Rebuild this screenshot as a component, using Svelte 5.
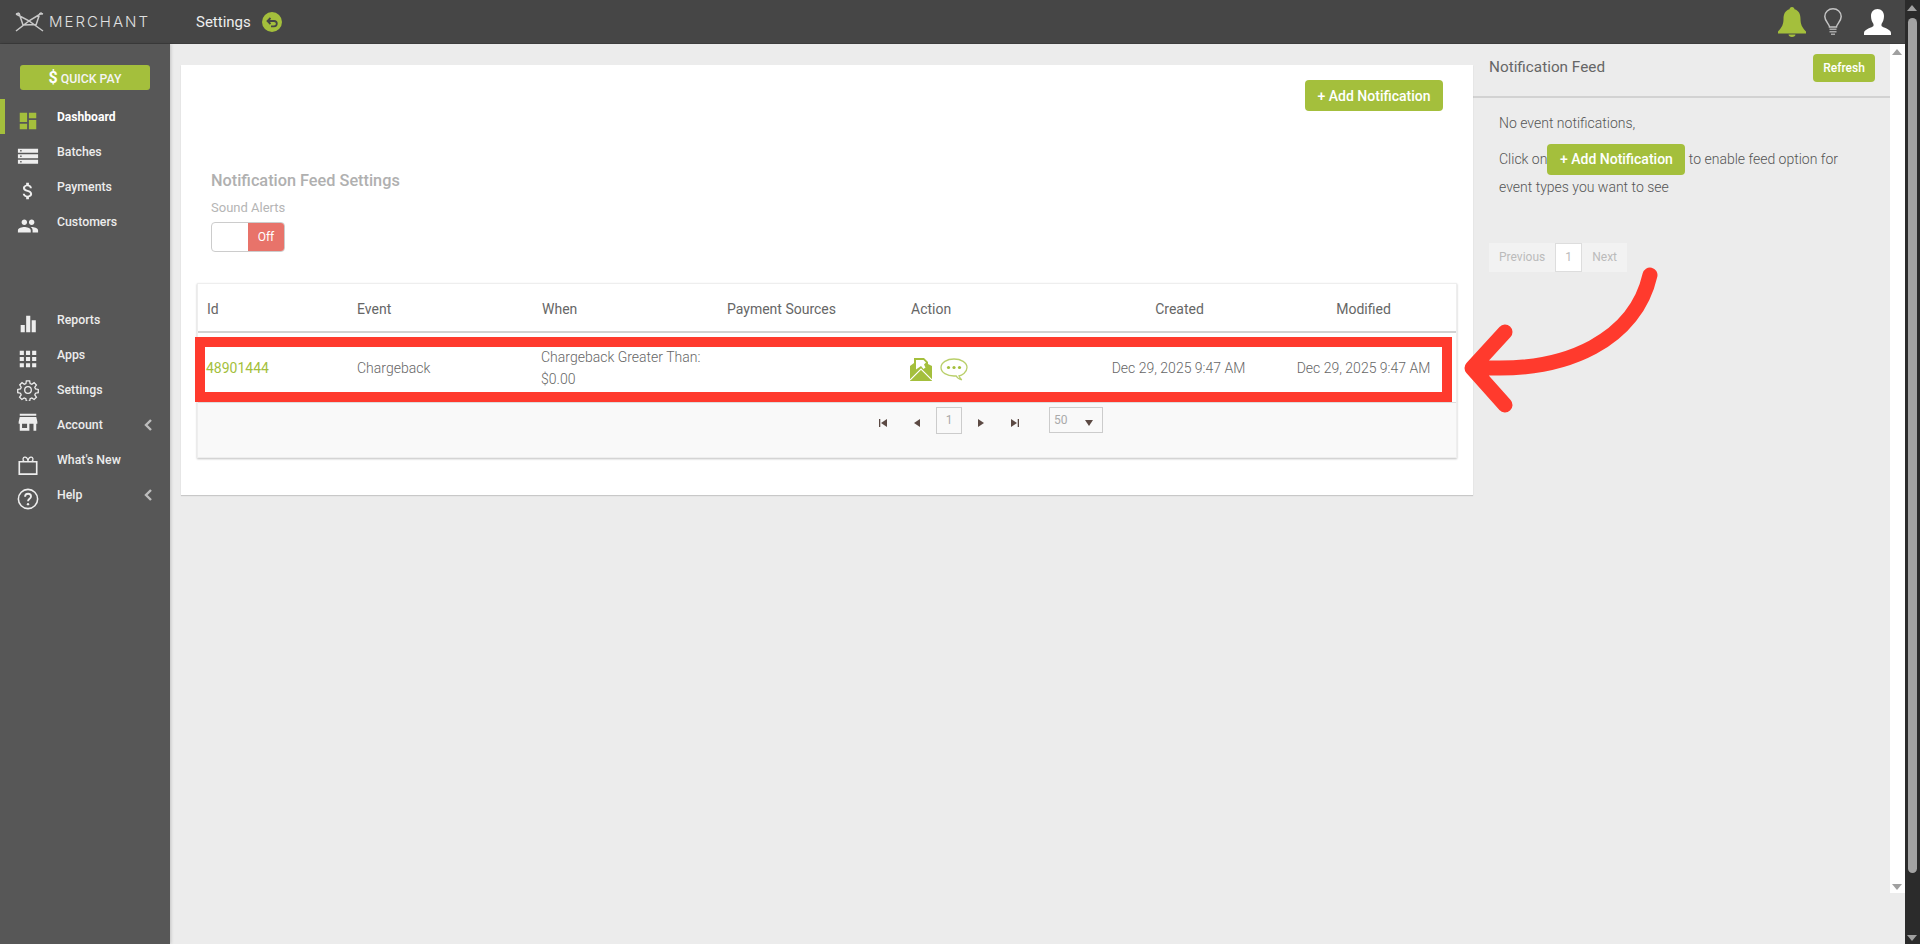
<script lang="ts">
  const topNav = [
    { label: 'Dashboard', icon: 'dashboard', active: true },
    { label: 'Batches', icon: 'batches' },
    { label: 'Payments', icon: 'payments' },
    { label: 'Customers', icon: 'customers' },
  ];
  const lowerNav = [
    { label: 'Reports', icon: 'reports' },
    { label: 'Apps', icon: 'apps' },
    { label: 'Settings', icon: 'settings' },
    { label: 'Account', icon: 'account', more: true },
    { label: "What's New", icon: 'new' },
    { label: 'Help', icon: 'help', more: true },
  ];
  const columns = ['Id', 'Event', 'When', 'Payment Sources', 'Action', 'Created', 'Modified'];
</script>

{#snippet navIcon(name: string)}
  <svg class="nav-icon" viewBox="0 0 24 24" aria-hidden="true">
    {#if name === 'dashboard'}
      <path fill="#a4bf3c" d="M3 13h8V3H3v10zm0 8h8v-6H3v6zm10 0h8V11h-8v10zm0-18v6h8V3h-8z" />
    {:else if name === 'batches'}
      <path fill="#eee" d="M1 4h22v4.500H1zM1 10h22v4.500H1zM1 16h22v4.500H1z" />
      <path fill="#575757" d="M3.500 5.500H5v1.500H3.500zM3.500 11.500H5V13H3.500zM3.500 17.500H5V19H3.500z" />
    {:else if name === 'payments'}
      <path fill="#eee" d="M11.800 10.900c-2.270-.590-3-1.200-3-2.150 0-1.090 1.010-1.850 2.700-1.850 1.780 0 2.440.850 2.500 2.100h2.210c-.070-1.720-1.120-3.300-3.210-3.810V3h-3v2.160c-1.940.420-3.500 1.680-3.500 3.610 0 2.310 1.910 3.460 4.700 4.130 2.500.600 3 1.480 3 2.410 0 .690-.490 1.790-2.700 1.790-2.060 0-2.870-.920-2.980-2.100h-2.200c.120 2.190 1.760 3.420 3.700 3.830V21h3v-2.150c1.950-.370 3.500-1.500 3.500-3.550 0-2.840-2.430-3.810-4.700-4.400z" />
    {:else if name === 'customers'}
      <path fill="#eee" d="M16 11c1.660 0 2.990-1.340 2.990-3S17.660 5 16 5c-1.660 0-3 1.340-3 3s1.340 3 3 3zm-8 0c1.660 0 2.990-1.340 2.990-3S9.660 5 8 5C6.340 5 5 6.340 5 8s1.340 3 3 3zm0 2c-2.330 0-7 1.170-7 3.500V19h14v-2.500c0-2.330-4.670-3.500-7-3.500zm8 0c-.290 0-.620.020-.970.050 1.160.840 1.970 1.970 1.970 3.450V19h6v-2.500c0-2.330-4.670-3.500-7-3.500z" />
    {:else if name === 'reports'}
      <path fill="#eee" d="M4 13h4.500v8H4zM10 3h4.500v18H10zM16 8h4.500v13H16z" />
    {:else if name === 'apps'}
      <path fill="#eee" d="M3 3h4.500v4.500H3zM9.800 3h4.500v4.500H9.800zM16.500 3H21v4.500h-4.500zM3 9.800h4.500v4.500H3zM9.800 9.800h4.500v4.500H9.800zM16.500 9.800H21v4.500h-4.500zM3 16.500h4.500V21H3zM9.800 16.500h4.500V21H9.800zM16.500 16.500H21V21h-4.500z" />
    {:else if name === 'settings'}
      <g fill="none" stroke="#eee" stroke-width="1.400">
        <circle cx="12" cy="12" r="3.600" />
        <path d="M10.200 2h3.600l.5 3 1.900.8 2.500-1.800 2.500 2.500-1.800 2.500.8 1.900 3 .5v3.600l-3 .5-.8 1.900 1.800 2.500-2.500 2.500-2.500-1.800-1.900.8-.5 3h-3.600l-.5-3-1.900-.8-2.500 1.800-2.500-2.500 1.800-2.500-.8-1.900-3-.5v-3.600l3-.5.8-1.900L3 6.500 5.500 4 8 5.800 9.700 5z" />
      </g>
    {:else if name === 'account'}
      <path fill="#eee" d="M21 3H3v2.200h18zm1.200 11v-2.200L21 6.500H3l-1.200 5.300V14H3v7.500h10.500V14h4.500v7.500h3V14zM11 18.500H5.500V14H11z" />
    {:else if name === 'new'}
      <g fill="none" stroke="#eee" stroke-width="1.800">
        <path d="M2.500 8.500h19v13.500h-19z" />
        <path d="M8 8.500C5.500 6.500 6.500 3 9 3.500c1.700.4 3 2.500 3 5 0-2.500 1.300-4.600 3-5 2.500-.5 3.500 3 1 5" stroke-width="1.400" />
      </g>
    {:else if name === 'help'}
      <circle cx="12" cy="12" r="10.500" fill="none" stroke="#eee" stroke-width="1.700" />
      <path fill="none" stroke="#eee" stroke-width="2" d="M8.800 9.500c0-2 1.500-3.200 3.300-3.200s3.200 1.200 3.200 2.900c0 2.600-3.300 2.600-3.300 5.300" />
      <circle cx="12" cy="17.600" r="1.300" fill="#eee" />
    {/if}
  </svg>
{/snippet}

{#snippet navRow(item: { label: string; icon: string; active?: boolean; more?: boolean })}
  <a class="nav-row" class:active={item.active} href="#top">
    <span class="nav-icon-cell ic-{item.icon}">{@render navIcon(item.icon)}</span>
    <span class="nav-label">{item.label}</span>
    {#if item.more}
      <svg class="chev" viewBox="0 0 8 12" aria-hidden="true"><path d="M7 1 2 6l5 5" fill="none" stroke="#bdbdbd" stroke-width="2.400" /></svg>
    {/if}
  </a>
{/snippet}

<div class="page">
  <div class="app">
    <header class="topbar">
      <div class="logo">
        <svg class="logo-mark" viewBox="0 0 29 21" aria-hidden="true">
          <path fill="none" stroke="#c8c8c8" stroke-width="1.500" d="M1 3 14 10 27 2M1 20 14 10 28 20M4 2 8 14M25 2 21 14M8 14l13-.5M1 3l3-1M25 2l3 1" />
        </svg>
        <span class="logo-text">MERCHANT</span>
      </div>
      <span class="page-title">Settings</span>
      <svg class="back" viewBox="0 0 20 20" aria-hidden="true">
        <circle cx="10" cy="10" r="10" fill="#a4bf3c" />
        <path fill="none" stroke="#464646" stroke-width="1.800" d="M8.500 6 5.500 9l3 3M5.500 9H12c1.700 0 2.800 1 2.800 2.600S13.700 14.400 12 14.400H9" />
      </svg>
      <div class="top-icons">
        <svg class="bell" viewBox="0 0 28 30" aria-hidden="true">
          <path fill="#a4bf3c" d="M14 0c1.500 0 2.500 1 2.500 2.300C21 3.500 22.500 7.500 22.500 12c0 5 1.500 8.500 5.500 12.500v2H0v-2c4-4 5.500-7.500 5.500-12.500 0-4.500 1.500-8.500 6-9.700C11.500 1 12.500 0 14 0zM10.500 27.500h7c0 1.500-1.500 2.500-3.500 2.500s-3.500-1-3.500-2.500z" />
        </svg>
        <svg class="bulb" viewBox="0 0 18 27" aria-hidden="true">
          <path fill="none" stroke="#c4c4c4" stroke-width="1.500" d="M5.500 19c0-3-4.700-5.500-4.700-10.500C.8 4 4.500.8 9 .8s8.200 3.200 8.200 7.700c0 5-4.700 7.500-4.700 10.500z" />
          <path fill="#a8a8a8" d="M5.500 20.500h7v1.500h-7zM5.500 23h7v1.500h-7zM7 25.500h4V27H7z" />
        </svg>
        <svg class="user" viewBox="0 0 27 26" aria-hidden="true">
          <path fill="#fff" d="M13.500 0c4 0 6.500 3 6.500 7 0 3-1 6-2.500 8v2c1 1.500 9.500 3 9.500 7v2H0v-2c0-4 8.500-5.500 9.500-7v-2C8 13 7 10 7 7c0-4 2.500-7 6.500-7z" />
        </svg>
      </div>
    </header>

    <div class="body">
      <nav class="sidebar">
        <button class="quick-pay"><span class="dollar">$</span> QUICK PAY</button>
        <div class="nav-group">
          {#each topNav as item (item.label)}
            {@render navRow(item)}
          {/each}
        </div>
        <div class="nav-group lower">
          {#each lowerNav as item (item.label)}
            {@render navRow(item)}
          {/each}
        </div>
      </nav>

      <main class="content">
        <section class="card">
          <div class="card-actions">
            <button class="btn-add">+ Add Notification</button>
          </div>
          <div class="settings">
            <h2>Notification Feed Settings</h2>
            <div class="field-label">Sound Alerts</div>
            <div class="toggle"><span class="knob"></span><span class="off">Off</span></div>
          </div>

          <div class="table">
            <div class="thead">
              {#each columns as col}
                <div class="th" class:center={col === 'Created' || col === 'Modified'}>{col}</div>
              {/each}
            </div>
            <div class="tr">
              <div class="td id">48901444</div>
              <div class="td">Chargeback</div>
              <div class="td when">Chargeback Greater Than:<br />$0.00</div>
              <div class="td"></div>
              <div class="td actions">
                <svg class="mail" viewBox="0 0 22 23" aria-hidden="true">
                  <path fill="#a4bf3c" d="M0 8 4 5V0h10l4 4v2l4 2v15H0z" />
                  <path fill="#fff" d="M6 2h7.500l2.500 2.500L14 6.500l1.500 3-2 1.500L11 8 6 11.500z" />
                  <path fill="none" stroke="#fff" stroke-width="1.200" d="M0 22 11 11l11 11" />
                </svg>
                <svg class="chat" viewBox="0 0 28 23" aria-hidden="true">
                  <path fill="none" stroke="#b9cf6a" stroke-width="1.300" d="M14 1c7 0 13 3.500 13 8.500S21.500 17.500 19 17.800c.5 1.500 1.500 3 2.800 4-2.300-.4-4.800-2-5.800-4-.7.100-1.300.2-2 .2C7 18 1 14.500 1 9.500S7 1 14 1z" />
                  <circle cx="8.500" cy="9.500" r="1.600" fill="#a4bf3c" />
                  <circle cx="14" cy="9.500" r="1.600" fill="#a4bf3c" />
                  <circle cx="19.500" cy="9.500" r="1.600" fill="#a4bf3c" />
                </svg>
              </div>
              <div class="td center">Dec 29, 2025 9:47 AM</div>
              <div class="td center">Dec 29, 2025 9:47 AM</div>
            </div>
            <div class="pager">
              <svg class="pg first" viewBox="0 0 8 8" aria-hidden="true"><path d="M0 0h1.300v8H0zM8 0v8L2 4z" /></svg>
              <svg class="pg prev" viewBox="0 0 6 8" aria-hidden="true"><path d="M6 0v8L0 4z" /></svg>
              <span class="pg-box">1</span>
              <svg class="pg next" viewBox="0 0 6 8" aria-hidden="true"><path d="M0 0v8l6-4z" /></svg>
              <svg class="pg last" viewBox="0 0 8 8" aria-hidden="true"><path d="M0 0v8l6-4zM6.700 0H8v8H6.700z" /></svg>
              <span class="pg-select">50 <svg viewBox="0 0 8 6" aria-hidden="true"><path d="M0 0h8L4 6z" /></svg></span>
            </div>
          </div>

          <div class="highlight"></div>
        </section>

        <aside class="feed">
          <div class="feed-head">
            <span class="feed-title">Notification Feed</span>
            <button class="btn-refresh">Refresh</button>
          </div>
          <div class="feed-body">
            <p class="first-line">No event notifications,</p>
            <p class="click-line">Click on<button class="btn-add inline">+ Add Notification</button> to enable feed option for</p>
            <p class="last-line">event types you want to see</p>
            <div class="feed-pager">
              <span class="fp">Previous</span><span class="fp cur">1</span><span class="fp">Next</span>
            </div>
          </div>
        </aside>

        <svg class="arrow" viewBox="0 0 200 150" aria-hidden="true">
          <path fill="none" stroke="#ff3a2d" stroke-width="15" stroke-linecap="round" stroke-linejoin="round" d="M190 10C176 72 110 110 14 102M45 67 12 103l33 37" />
        </svg>
      </main>

      <div class="inner-scroll"><span class="tri up"></span><span class="tri down"></span></div>
    </div>
  </div>

  <div class="outer-scroll"><span class="tri up"></span><span class="thumb"></span><span class="tri down"></span></div>
</div>

<style>
  :global(body) {
    margin: 0;
    background: #fff;
    font-family: Roboto, 'Liberation Sans', sans-serif;
    color: #666;
  }

  .page {
    display: flex;
    width: 1920px;
    height: 944px;
    overflow: hidden;
  }

  .app {
    display: flex;
    flex-direction: column;
    flex: 0 0 1905px;
    min-width: 0;
  }

  .topbar {
    display: flex;
    align-items: center;
    flex: 0 0 44px;
    background: #464646;
    box-sizing: border-box;
    border-bottom: 1px solid #3d3d3d;
  }

  .logo {
    display: flex;
    align-items: center;
    gap: 5px;
    width: 196px;
    padding-left: 15px;
    box-sizing: border-box;
  }

  .logo-mark {
    width: 29px;
    height: 21px;
  }

  .logo-text {
    font-family: Inter, Roboto, sans-serif;
    font-weight: 300;
    font-size: 15px;
    letter-spacing: 2px;
    color: #e0e0e0;
  }

  .page-title {
    font-size: 15px;
    color: #eee;
  }

  .back {
    width: 20px;
    height: 20px;
    margin-left: 11px;
  }

  .top-icons {
    display: flex;
    align-items: center;
    margin-left: auto;
    padding-right: 14px;
    gap: 18px;
  }

  .bell {
    width: 28px;
    height: 30px;
  }

  .bulb {
    width: 18px;
    height: 27px;
  }

  .user {
    width: 27px;
    height: 26px;
    margin-left: 4px;
  }

  .body {
    display: flex;
    flex: 1;
    min-height: 0;
    background: #ececec;
  }

  .sidebar {
    flex: 0 0 170px;
    background: #575757;
    padding-top: 21px;
    box-sizing: border-box;
    box-shadow: 1px 0 3px rgba(0, 0, 0, 0.18);
    z-index: 1;
  }

  .quick-pay {
    display: block;
    width: 130px;
    height: 25px;
    margin: 0 0 9px 20px;
    padding: 0;
    border: 0;
    border-radius: 3px;
    background: #a4bf3c;
    color: #f4f4f4;
    font: 500 12.3px Roboto, sans-serif;
  }

  .dollar {
    font-size: 16px;
    font-weight: 700;
    color: #fff;
  }

  .nav-group.lower {
    margin-top: 63px;
  }

  .nav-row {
    display: flex;
    align-items: center;
    height: 35px;
    color: #ececec;
    text-decoration: none;
    font-size: 12.3px;
    font-weight: 500;
  }

  .nav-row.active {
    box-shadow: inset 5px 0 0 #a4bf3c;
    color: #fff;
    font-size: 12.1px;
    font-weight: 700;
  }

  .nav-icon-cell {
    display: flex;
    justify-content: center;
    box-sizing: border-box;
    width: 57px;
    padding: 8px 1px 0 0;
  }

  .nav-icon-cell.ic-settings {
    padding-top: 0;
  }

  .nav-icon-cell.ic-account {
    padding-top: 0;
    margin-top: -5px;
  }

  .nav-icon-cell.ic-new {
    padding-top: 10px;
  }

  .nav-icon {
    width: 22px;
    height: 22px;
  }

  .nav-label {
    flex: 1;
    padding-top: 1px;
  }

  .chev {
    width: 8px;
    height: 12px;
    margin-right: 18px;
  }

  .content {
    position: relative;
    display: flex;
    flex: 1;
    align-items: flex-start;
    min-width: 0;
    padding-left: 11px;
  }

  .card {
    position: relative;
    box-sizing: border-box;
    flex: 0 0 1292px;
    height: 430px;
    margin-top: 21px;
    padding: 15px 15px 0 15px;
    background: #fff;
    box-shadow: 0 1px 1px rgba(0, 0, 0, 0.15);
  }

  .card-actions {
    display: flex;
    justify-content: flex-end;
    padding-right: 15px;
  }

  .btn-add {
    height: 31px;
    width: 138px;
    padding: 0;
    border: 0;
    border-radius: 4px;
    background: #a4bf3c;
    color: #fff;
    font: 500 14px Roboto, sans-serif;
  }

  .settings {
    padding: 57px 0 0 15px;
  }

  h2 {
    margin: 0;
    font-size: 16.3px;
    line-height: 26px;
    font-weight: 500;
    color: #b0b0b0;
  }

  .field-label {
    margin-top: 5px;
    font-size: 13px;
    line-height: 18px;
    color: #b5b5b5;
  }

  .toggle {
    display: flex;
    box-sizing: border-box;
    width: 74px;
    height: 30px;
    margin-top: 5px;
    border: 1px solid #ccc;
    border-radius: 4px;
    overflow: hidden;
  }

  .knob {
    flex: 1;
  }

  .off {
    width: 36px;
    background: #e8736a;
    color: #fff;
    font-size: 12px;
    line-height: 28px;
    text-align: center;
  }

  .table {
    display: flex;
    flex-direction: column;
    box-sizing: border-box;
    width: 1260px;
    height: 175px;
    margin: 31px 0 0 1px;
    border: 1px solid #eee;
    box-shadow: 0 1px 2px rgba(0, 0, 0, 0.25);
  }

  .thead,
  .tr {
    display: grid;
    grid-template-columns: 149px repeat(6, 185px);
    align-items: center;
    font-size: 14px;
  }

  .thead {
    height: 49px;
    box-sizing: border-box;
    padding-top: 3px;
    border-bottom: 2px solid #d2d2d2;
    color: #666;
  }

  .th,
  .td {
    padding-left: 10px;
  }

  .th:first-child,
  .th:nth-child(5) {
    padding-left: 9px;
  }

  .th.center,
  .td.center {
    padding-left: 0;
    text-align: center;
  }

  .th:last-child,
  .td:last-child,
  .td:nth-child(6) {
    padding-right: 2px;
  }

  .tr {
    height: 69px;
    font-weight: 300;
    color: #666;
  }

  .td.id {
    color: #a4bf3c;
    font-weight: 400;
    padding-left: 8px;
  }

  .td.when {
    padding-left: 9px;
    line-height: 22px;
  }

  .td.actions {
    display: flex;
    align-items: center;
    gap: 8px;
    padding: 4px 0 0 8px;
  }

  .mail {
    width: 22px;
    height: 23px;
  }

  .chat {
    width: 28px;
    height: 23px;
  }

  .pager {
    display: flex;
    flex: 1;
    align-items: flex-start;
    padding: 4px 0 0 681px;
    background: #f9f9f9;
    border-top: 1px solid #ddd;
  }

  .pg {
    width: 8px;
    height: 8px;
    margin-top: 12px;
    fill: #5c4a44;
  }

  .pg.prev,
  .pg.next {
    width: 6px;
  }

  .pg.prev {
    margin-left: 27px;
  }

  .pg-box {
    width: 26px;
    height: 27px;
    margin: 0 16px;
    box-sizing: border-box;
    border: 1px solid #ccc;
    color: #aaa;
    font-size: 12px;
    line-height: 24px;
    text-align: center;
  }

  .pg.last {
    margin-left: 27px;
  }

  .pg-select {
    position: relative;
    box-sizing: border-box;
    width: 54px;
    height: 26px;
    margin-left: 30px;
    padding-left: 4px;
    border: 1px solid #ccc;
    color: #aaa;
    font-size: 12px;
    line-height: 24px;
  }

  .pg-select svg {
    position: absolute;
    right: 9px;
    top: 12px;
    width: 8px;
    height: 6px;
    fill: #5c4a44;
  }

  .highlight {
    position: absolute;
    left: 14px;
    top: 272px;
    width: 1257px;
    height: 65px;
    box-sizing: border-box;
    border: 10px solid #ff3a2d;
  }

  .feed {
    flex: 1;
    min-width: 0;
    color: #666;
  }

  .feed-head {
    display: flex;
    align-items: flex-start;
    justify-content: space-between;
    box-sizing: border-box;
    height: 54px;
    padding: 10px 15px 0 16px;
    border-bottom: 2px solid #d2d2d2;
    font-size: 15.3px;
  }

  .feed-title {
    line-height: 26px;
  }

  .btn-refresh {
    width: 62px;
    height: 28px;
    padding: 0;
    border: 0;
    border-radius: 4px;
    background: #a4bf3c;
    color: #fff;
    font: 500 12px Roboto, sans-serif;
  }

  .feed-body {
    padding: 13px 15px 0 16px;
    font-size: 14px;
    font-weight: 300;
    color: #555;
  }

  p {
    margin: 0;
    padding-left: 10px;
  }

  .first-line {
    line-height: 24px;
  }

  .click-line {
    margin-top: 8px;
    white-space: nowrap;
    line-height: 32px;
  }

  .last-line {
    line-height: 24px;
    margin-top: -2px;
  }

  .btn-add.inline {
    margin-bottom: 2px;
    vertical-align: middle;
  }

  .feed-pager {
    display: flex;
    align-items: stretch;
    margin-top: 44px;
    height: 29px;
    font-size: 12px;
    font-weight: 400;
    color: #bbb;
  }

  .fp {
    padding: 0 10px;
    background: #f2f2f2;
    line-height: 29px;
  }

  .fp.cur {
    box-sizing: border-box;
    width: 27px;
    padding: 0;
    text-align: center;
    background: #fff;
    border: 1px solid #ddd;
    line-height: 27px;
  }

  .arrow {
    position: absolute;
    left: 1290px;
    top: 221px;
    width: 200px;
    height: 150px;
  }

  .inner-scroll {
    position: relative;
    flex: 0 0 15px;
    height: 849px;
    background: #fff;
  }

  .outer-scroll {
    position: relative;
    flex: 0 0 15px;
    background: #2b2b2b;
  }

  .thumb {
    position: absolute;
    left: 3px;
    top: 18px;
    width: 9px;
    height: 855px;
    border-radius: 5px;
    background: #a3a3a3;
  }

  .tri {
    position: absolute;
    left: 2px;
    width: 0;
    height: 0;
    border-left: 5px solid transparent;
    border-right: 5px solid transparent;
  }

  .tri.up {
    top: 5px;
    border-bottom: 6px solid #a0a0a0;
  }

  .tri.down {
    bottom: 3px;
    border-top: 6px solid #a0a0a0;
  }
</style>
